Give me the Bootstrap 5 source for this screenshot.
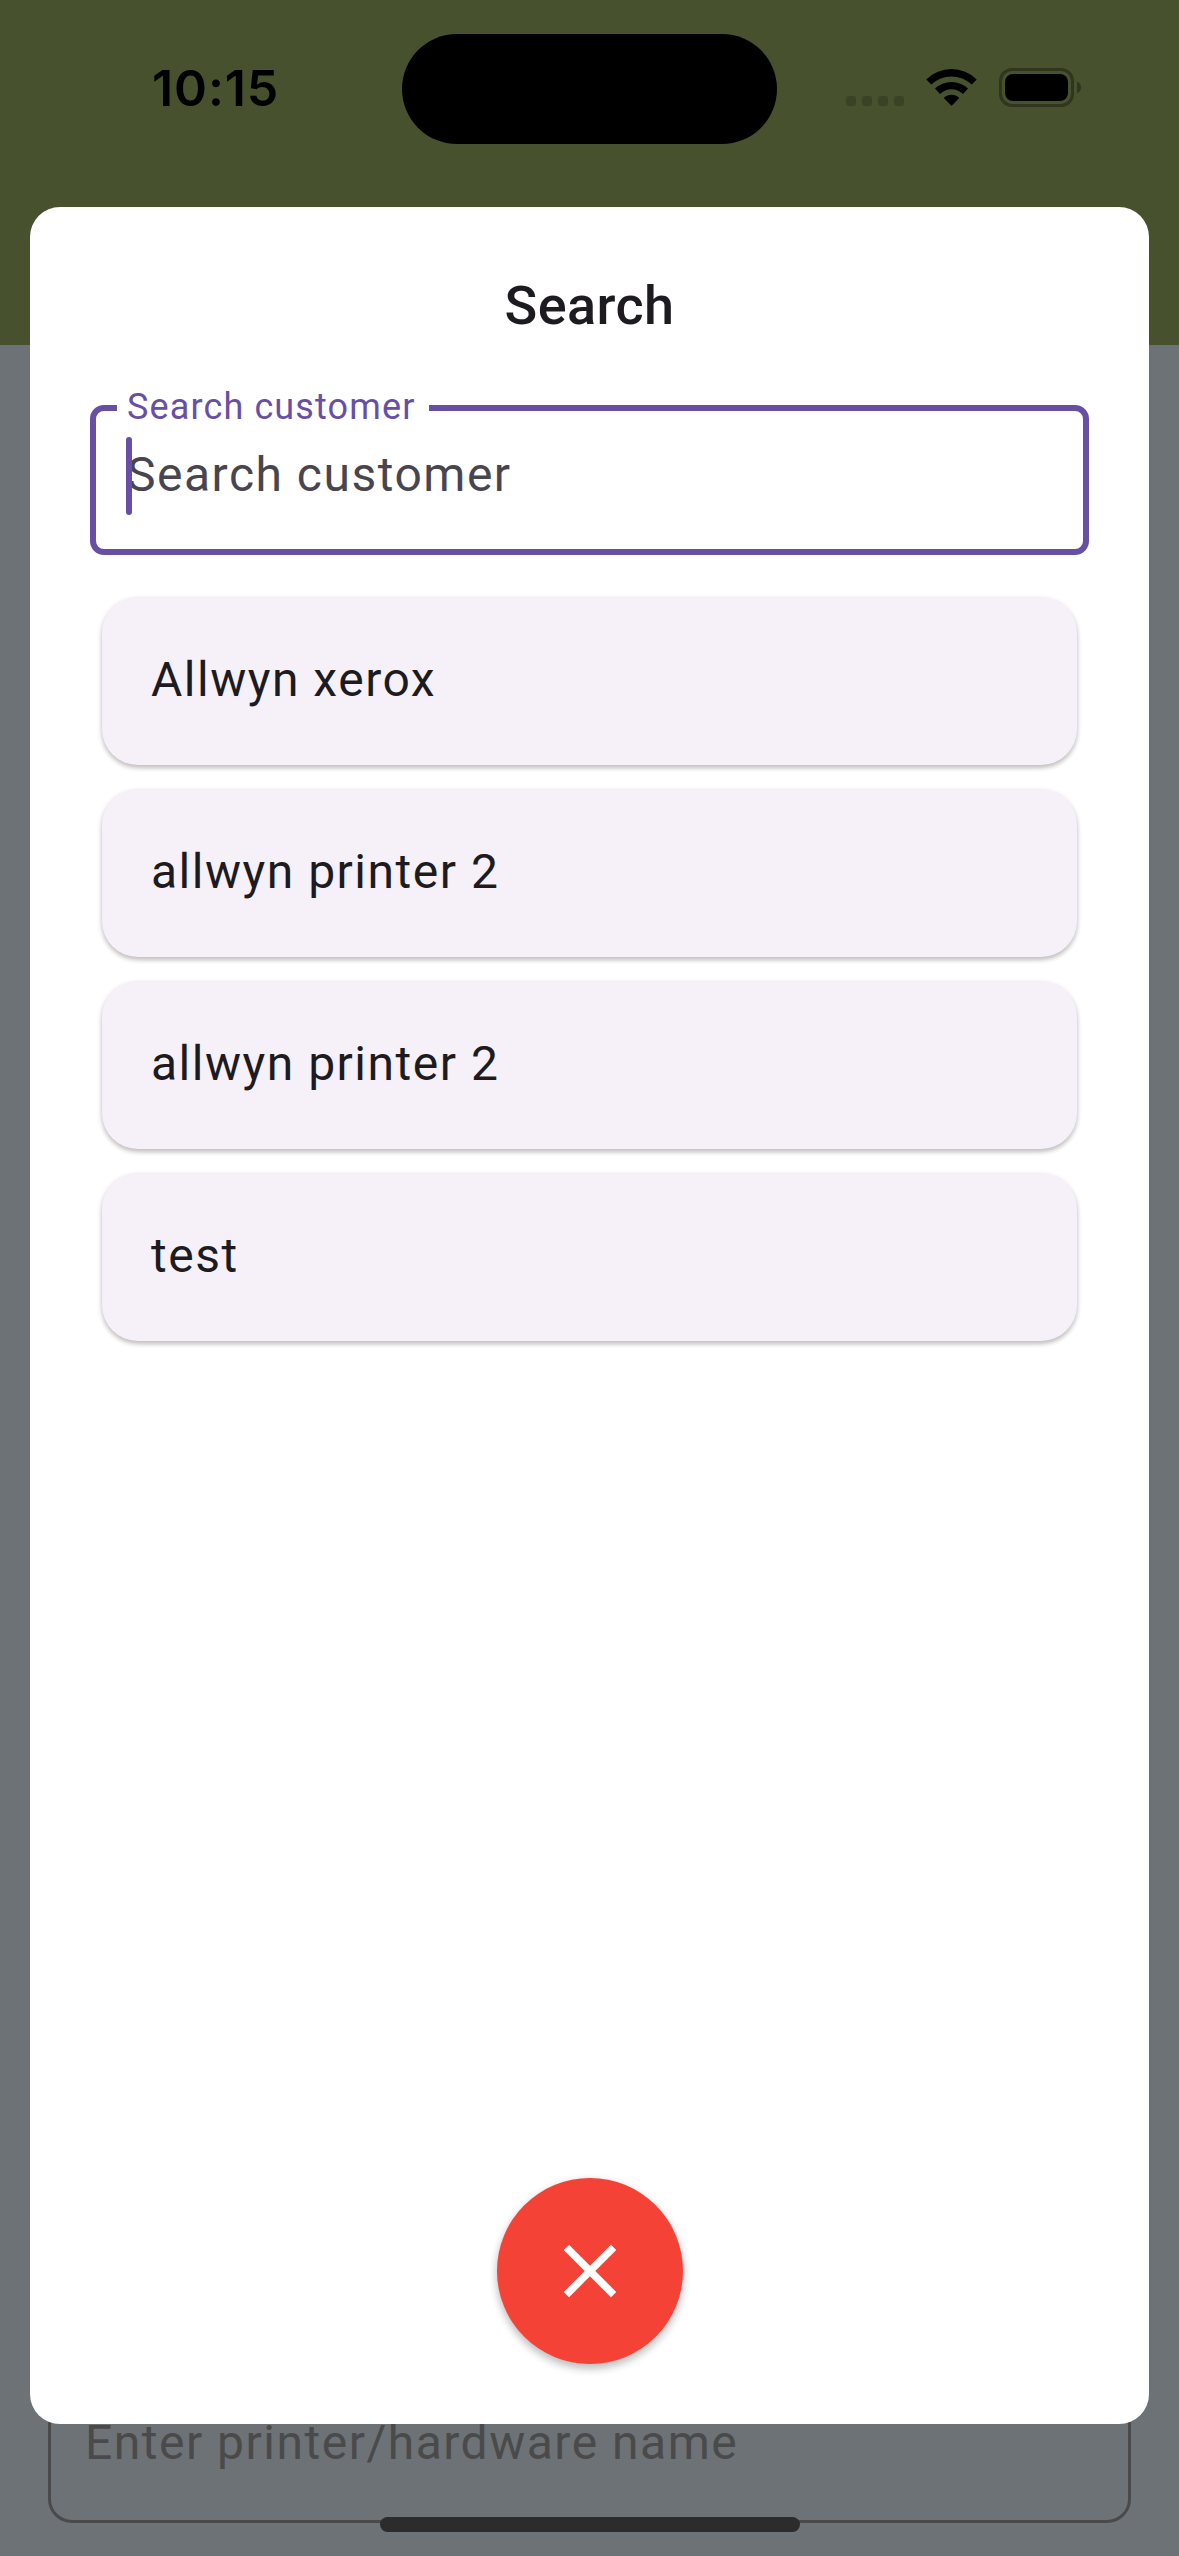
<!DOCTYPE html>
<html lang="en">
<head>
<meta charset="utf-8">
<meta name="viewport" content="width=device-width, initial-scale=1">
<title>Search customer</title>
<link href="https://cdn.jsdelivr.net/npm/bootstrap@5.3.0/dist/css/bootstrap.min.css" rel="stylesheet">
<style>
  body { font-family: Roboto, "Liberation Sans", sans-serif; font-size: 48px; letter-spacing: 1.5px; line-height: 72px; color: #1d1b20; }
  .screen { width: 1179px; height: 2556px; background: #6d7276; }
  .app-header { height: 345px; background: #47512e; }
  .status-bar { height: 177px; padding: 34px 98px 0 152px; }
  .clock { width: 250px; height: 110px; font: 600 50px/108px Inter, sans-serif; letter-spacing: .9px; color: #000; }
  .island { width: 375px; height: 110px; background: #000; }
  .status-icons { height: 110px; width: 235px; }
  .page-field { height: 180px; margin: 0 48px 33px; padding: 61px 34px 0; border: 3px solid #4a4a4a; border-radius: 24px; color: #4a4a4a; }
  .home-bar { left: 380px; bottom: 24px; width: 420px; height: 15px; background: #2c2c2c; z-index: 3; }
  .search-dialog { left: 30px; top: 207px; width: 1119px; height: 2217px; padding: 63px 60px 60px; border-radius: 30px; z-index: 2; }
  .dialog-title { font-size: 54px; line-height: 72px; letter-spacing: .4px; font-weight: 500; margin: 0 0 63px; }
  .outlined { height: 150px; border: 6px solid #6750a4; border-radius: 14px; padding: 28px 31px 0; margin-bottom: 42px; }
  .float-label { left: 21px; top: -31px; width: 312px; padding-left: 10px; font-size: 36px; letter-spacing: 1.125px; line-height: 54px; color: #6750a4; }
  .hint { color: #49454f; line-height: 72px; }
  .caret { left: 30px; top: 26px; width: 6px; height: 78px; border-radius: 3px; background: #6750a4; }
  .results { gap: 24px; padding: 0 12px; }
  .result { height: 168px; border: 0; border-radius: 36px; padding: 0 49px 2px; background: #f6f1f9; color: #1d1b20;
    box-shadow: 0 3px 4px rgba(0,0,0,.18), 0 2px 6px rgba(0,0,0,.11); }
  .close-btn { width: 186px; height: 186px; background: #f44336; box-shadow: 0 5px 8px rgba(0,0,0,.2), 0 2px 10px rgba(0,0,0,.1); }
</style>
</head>
<body class="overflow-hidden">
<div class="screen position-relative d-flex flex-column">
  <header class="app-header">
    <div class="status-bar d-flex">
      <div class="clock">10:15</div>
      <div class="island rounded-pill"></div>
      <svg class="status-icons ms-auto" viewBox="846 34 235 110" aria-hidden="true">
        <g fill="#3b4327"><rect x="846" y="96" width="10" height="10" rx="3"/><rect x="862" y="96" width="10" height="10" rx="3"/><rect x="878" y="96" width="10" height="10" rx="3"/><rect x="894" y="96" width="10" height="10" rx="3"/></g>
        <path d="M926.3 79.5Q937 69 951.5 69T976.7 79.5L971.7 84.6Q963 76.5 951.5 76.5T931.3 84.6Z"/>
        <path d="M935 88.6Q942 82 951.5 82T968 88.6L963 93.9Q958 89.2 951.5 89.2T940 93.9Z"/>
        <path d="M943.8 98Q947.2 94.7 951.5 94.7T959.2 98L951.5 106Z"/>
        <rect x="1000.5" y="69.5" width="72" height="36" rx="11.5" fill="none" stroke="#2f351f" stroke-width="3"/>
        <rect x="1005" y="74" width="63" height="27" rx="8"/>
        <path d="M1077 81.5Q1081 83 1081 87.3T1077 93.2Z" fill="#2f351f"/>
      </svg>
    </div>
  </header>
  <main class="flex-grow-1 d-flex flex-column justify-content-end">
    <div class="page-field">Enter printer/hardware name</div>
  </main>
  <section class="search-dialog position-absolute bg-white d-flex flex-column">
    <h1 class="dialog-title text-center">Search</h1>
    <div class="outlined position-relative">
      <span class="float-label position-absolute bg-white text-nowrap">Search customer</span>
      <div class="hint">Search customer</div>
      <span class="caret position-absolute"></span>
    </div>
    <div class="results d-flex flex-column">
      <div class="card result justify-content-center">Allwyn xerox</div>
      <div class="card result justify-content-center">allwyn printer 2</div>
      <div class="card result justify-content-center">allwyn printer 2</div>
      <div class="card result justify-content-center">test</div>
    </div>
    <button type="button" class="btn close-btn rounded-circle border-0 p-0 mt-auto mx-auto d-flex align-items-center justify-content-center" aria-label="Close">
      <svg width="90" height="90" viewBox="0 0 24 24" fill="#fff"><path d="M19 6.41L17.59 5 12 10.59 6.41 5 5 6.41 10.59 12 5 17.59 6.41 19 12 13.41 17.59 19 19 17.59 13.41 12z"/></svg>
    </button>
  </section>
  <div class="home-bar position-absolute rounded-pill"></div>
</div>
<script src="https://cdn.jsdelivr.net/npm/bootstrap@5.3.0/dist/js/bootstrap.bundle.min.js"></script>
</body>
</html>
